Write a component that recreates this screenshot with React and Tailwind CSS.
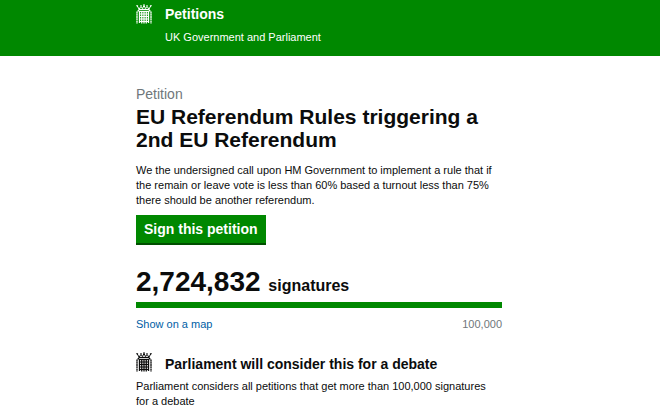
const debate = {
  title: 'Parliament will consider this for a debate',
  text: 'Parliament considers all petitions that get more than 100,000 signatures for a debate',
}

function Portcullis({ className }) {
  return (
    <svg viewBox="0 0 16 20" className={className} fill="none" stroke="currentColor" aria-hidden="true">
      {/* crown */}
      <path d="M1 1.500L3 5L5 2.500L6.500 4.500L8 1.500L9.500 4.500L11 2.500L13 5L15 1.500" strokeWidth="1" />
      <path d="M2.500 5.500h11" strokeWidth="1.400" />
      <path d="M7 1h2M.3 1.800h1.800M13.900 1.800h1.800M4.200 1.800h1.600M10.200 1.800h1.600" strokeWidth="1" />
      {/* gate bars */}
      <path d="M3.500 7v12M5.750 7v12.500M8 7v12.500M10.250 7v12.500M12.500 7v12" strokeWidth="1.300" />
      <path d="M2.800 7.500h10.400M3 10h10M3 12.500h10M3 15h10M3 17.500h10" strokeWidth="1" />
      {/* side chains */}
      <path d="M3 6L1 8v11.500M13 6l2 2v11.500" strokeWidth="1.300" strokeDasharray="2 .3" />
    </svg>
  )
}

function Container({ className = '', children }) {
  return <div className={`mx-auto max-w-[388px] ${className}`}>{children}</div>
}

export default function App() {
  return (
    <div className="bg-white font-['Liberation_Sans',Arial,sans-serif] text-[11px] leading-[15px] text-[#0b0c0c]">
      <header className="bg-[#008800] pt-1 pb-[11px] text-white">
        <Container className="flex gap-[13px]">
          <Portcullis className="h-5 w-4 shrink-0" />
          <div>
            <a href="#petitions" className="block text-[14px] leading-5 font-bold">Petitions</a>
            <p className="mt-[6px]">UK Government and Parliament</p>
          </div>
        </Container>
      </header>

      <main>
        <Container className="pt-7 pr-[22px]">
          <h1 className="text-[21px] leading-[23px] font-bold">
            <span className="mb-px block text-[14px] leading-5 font-normal text-[#6f777b]">Petition</span>
            EU Referendum Rules triggering a 2nd EU Referendum
          </h1>
          <p className="mt-3">
            We the undersigned call upon HM Government to implement a rule that if the remain or
            leave vote is less than 60% based a turnout less than 75% there should be another
            referendum.
          </p>
          <button
            type="button"
            className="mt-[7px] h-[30px] border-b-2 border-[#004f00] bg-[#008800] px-2 text-[14px] font-bold text-white"
          >
            Sign this petition
          </button>

          <section className="mt-[23px]">
            <p className="text-[28px] leading-7 font-bold">
              2,724,832 <span className="text-[16px]">signatures</span>
            </p>
            <div className="mt-[2px] h-[6px] bg-[#008800]" />
            <div className="mt-[9px] flex justify-between">
              <a href="#map" className="text-[#005ea5]">Show on a map</a>
              <span className="text-[#6f777b]">100,000</span>
            </div>
          </section>

          <section className="mt-5 pr-2">
            <h2 className="flex gap-[13px] text-[14px] leading-6 font-bold">
              <Portcullis className="h-5 w-4 shrink-0" />
              {debate.title}
            </h2>
            <p className="mt-[3px]">{debate.text}</p>
          </section>
        </Container>
      </main>
    </div>
  )
}
